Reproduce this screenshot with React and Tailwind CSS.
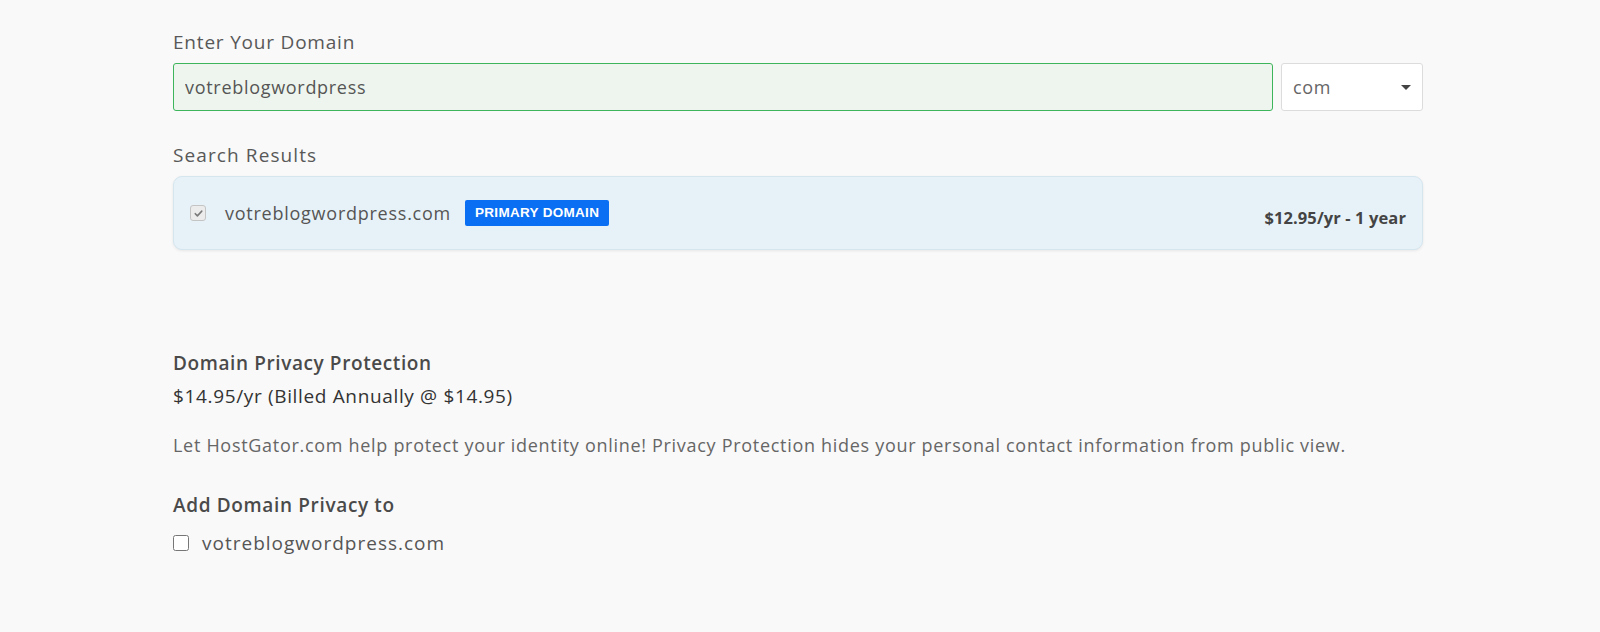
export default function App() {
  const domain = "votreblogwordpress";

  return (
    <main
      className="min-h-screen bg-[#f9f9f9] text-[#555]"
      style={{ fontFamily: '"Open Sans", sans-serif' }}
    >
      <div className="ml-[173px] w-[1250px] pt-[30px]">
        {/* Domain search */}
        <label className="block text-[19px] leading-[24px] tracking-[0.8px] text-[#585858] mb-[9px]">
          Enter Your Domain
        </label>
        <div className="flex gap-[8px]">
          <input
            type="text"
            defaultValue={domain}
            className="h-[48px] flex-1 rounded-[3px] border-[1.5px] border-[#3db65b] bg-[#eef5ee] px-[11px] text-[18px] tracking-[0.7px] text-[#555] outline-none"
          />
          <div className="relative flex h-[48px] w-[142px] items-center rounded-[3px] border border-[#dcdcdc] bg-white px-[11px] text-[18px] tracking-[0.7px] text-[#666]">
            com
            <span className="absolute right-[11px] top-[21px] h-0 w-0 border-x-[5px] border-t-[5px] border-x-transparent border-t-[#444]"></span>
          </div>
        </div>

        {/* Search results */}
        <p className="mt-[32px] mb-[9px] text-[19px] leading-[24px] tracking-[1.1px] text-[#585858]">
          Search Results
        </p>
        <div className="flex h-[74px] items-center justify-between rounded-[9px] border border-[#d5e6ef] bg-[#e7f2f8] pl-[16px] pr-[16px] shadow-[0_1px_3px_rgba(0,0,0,0.08)]">
          <div className="flex items-center">
            <span className="flex h-[16px] w-[16px] items-center justify-center rounded-[3px] border border-[#c4c4c4] bg-[#ececec]">
              <svg viewBox="0 0 12 12" className="h-[11px] w-[11px]">
                <path d="M2.5 6.2l2.3 2.4 4.8-5.2" fill="none" stroke="#7a7a7a" strokeWidth="1.7" strokeLinecap="round" strokeLinejoin="round" />
              </svg>
            </span>
            <span className="ml-[19px] text-[18px] tracking-[0.75px] text-[#555]">{domain}.com</span>
            <span
              className="ml-[14px] rounded-[2px] bg-[#0a6ff2] px-[10px] py-[4px] text-[13.5px] font-bold leading-[18px] tracking-[0.3px] text-white"
              style={{ fontFamily: '"Liberation Sans", Arial, sans-serif' }}
            >
              PRIMARY DOMAIN
            </span>
          </div>
          <span className="mt-[11px] text-[16.5px] font-bold tracking-[0.1px] text-[#444]">$12.95/yr - 1 year</span>
        </div>

        {/* Privacy */}
        <div className="mt-[101px]">
          <h3 className="text-[19px] leading-[24px] tracking-[0.6px] font-semibold text-[#4a4a4a]">
            Domain Privacy Protection
          </h3>
          <p className="mt-[9px] text-[19px] leading-[24px] tracking-[0.65px] text-[#333]">
            $14.95/yr (Billed Annually @ $14.95)
          </p>
          <p className="mt-[25px] text-[18px] leading-[24px] tracking-[0.7px] text-[#666]">
            Let HostGator.com help protect your identity online! Privacy Protection hides your personal contact information from public view.
          </p>
          <h3 className="mt-[36px] text-[19px] leading-[24px] tracking-[0.65px] font-semibold text-[#4a4a4a]">
            Add Domain Privacy to
          </h3>
          <label className="mt-[14px] flex h-[24px] items-center gap-[13px] text-[19px] tracking-[1px] text-[#555]">
            <input type="checkbox" className="h-[16px] w-[16px] rounded-[3px] border border-[#999]" />
            {domain}.com
          </label>
        </div>
      </div>
    </main>
  );
}
